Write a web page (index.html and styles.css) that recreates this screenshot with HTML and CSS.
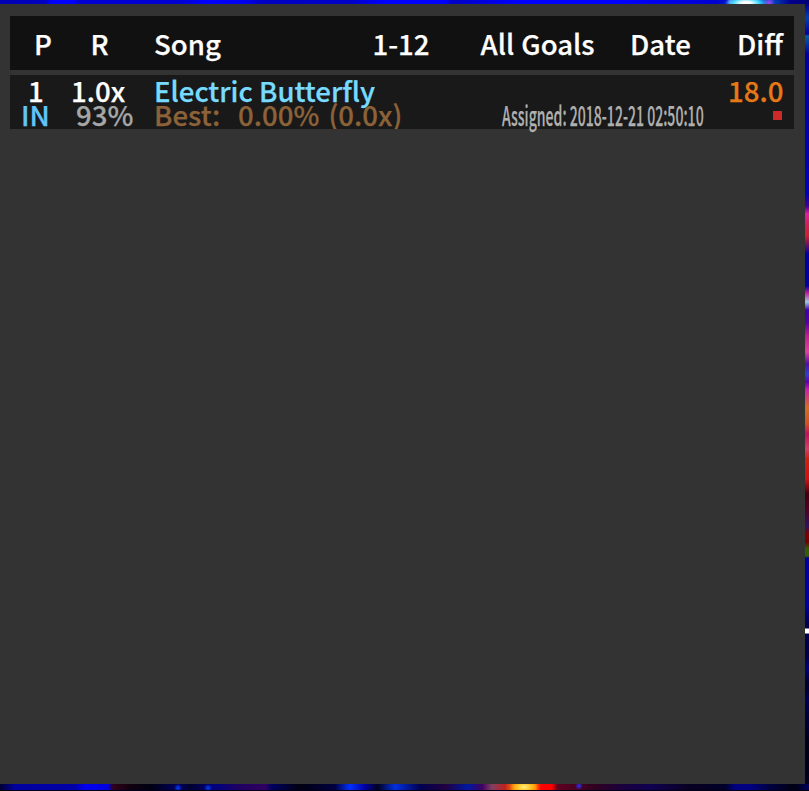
FILE: index.html
```
<!DOCTYPE html>
<html lang="en">
<head>
<meta charset="utf-8">
<title>Goals</title>
<link rel="stylesheet" href="styles.css">
</head>
<body>
<div class="backdrop">
  <div class="sky-top"></div>
  <main class="panel">
    <header class="bar columns">
      <span class="priority">P</span><span class="rate">R</span><span class="song">Song</span><span class="range">1-12</span><span class="filter">All Goals</span><span class="date">Date</span><span class="diff">Diff</span>
    </header>
    <section class="bar goal">
      <div class="line">
        <span class="g-priority">1</span><span class="g-rate">1.0x</span><span class="g-song">Electric Butterfly</span><span class="g-diff">18.0</span>
      </div>
      <div class="line second">
        <span class="g-mod">IN</span><span class="g-percent">93%</span><span class="g-best">Best:</span><span class="g-score">0.00% (0.0x)</span><span class="g-assigned">Assigned: 2018-12-21 02:50:10</span><i class="remove"></i>
      </div>
    </section>
  </main>
  <div class="sky-side"></div>
  <div class="sky-bottom"></div>
</div>
</body>
</html>
```
FILE: styles.css
```
* { box-sizing: border-box; }
body {
  margin: 0;
  overflow: hidden;
  background: #00005a;
  font: 500 27.6px "Noto Sans CJK JP", sans-serif;
  color: #fff;
  -webkit-text-stroke: 0.25px currentColor;
}
.backdrop {
  display: grid;
  grid-template-columns: 805px 4px;
  grid-template-rows: 4px 780px 7px;
  width: 809px;
  height: 791px;
}
.sky-top {
  grid-column: 1 / 3;
  background:
    radial-gradient(ellipse 22px 7px at 746px 3px, #fff 20%, #40d8ff 60%, transparent),
    radial-gradient(circle 4px at 731px 2px, #d070ff, transparent),
    radial-gradient(circle 6px at 769px 3px, #b040ff, transparent),
    linear-gradient(90deg, #0000b4, #0000c0 45px, #0000ff 52px, #0000ff 74px, #0000d2 78px, #0000d2 180px, #00f 205px, #0000f0 245px, #0000c4 260px, #0000c8 350px, #00f 385px, #00f 445px, #0000c4 452px, #00f 520px, #00f 620px, #0000d0 715px, #0050c0 770px, #000090 790px, #000070);
}
.panel { padding: 12px 11px 0 10px; background: #333; }
.sky-side {
  background: linear-gradient(180deg, #000090 0, #0040b0 14px, #0000a0 30px, #0060a0 32px, #0000a0 50px, #0000b8 190px, #400090 202px, #e020a0 210px, #d02050 222px, #d02030 232px, #0000a0 250px, #0000a0 282px, #c020a0 289px, #a0c8e0 298px, #4000b0 306px, #5000a0 318px, #c02090 332px, #e040a0 348px, #5010a0 360px, #3040d0 370px, #6000b0 378px, #d020b0 386px, #d07020 404px, #d05020 420px, #c01060 430px, #d04060 445px, #d02010 455px, #d01010 475px, #400010 490px, #500020 504px, #301060 522px, #800000 530px, #700000 538px, #306000 545px, #306000 552px, #0000a0 554px, #0000a0 600px, #000040 624px, #fff 625px, #fff 629px, #000050 630px, #000040 650px, #000078 665px, #000028 680px, #000050 695px, #000018 740px, #000020);
}
.sky-bottom {
  grid-column: 1 / 3;
  background:
    linear-gradient(transparent 6px, #000018 6px),
    radial-gradient(ellipse 14px 8px at 524px 3px, #fff080, #ffc020 50%, transparent),
    radial-gradient(circle 4px at 178px 4px, #0040ff, transparent),
    radial-gradient(circle 4px at 208px 4px, #0040ff, transparent),
    radial-gradient(circle 4px at 579px 2px, #3030ff, transparent),
    linear-gradient(90deg, #000030, #0000a0 15px, #0000a8 75px, #0000f0 85px, #0000e0 108px, #300018 113px, #100010 130px, #000010 150px, #000060 178px, #000030 190px, #000080 215px, #200060 240px, #300060 265px, #000060 272px, #000010 300px, #000040 335px, #0030ff 350px, #0000a0 365px, #000020 378px, #0030e0 395px, #000050 420px, #200040 445px, #0018a0 468px, #400060 482px, #804060 492px, #c02020 505px, #ff8000 515px, #ff8000 535px, #f00 541px, #f00 552px, #600020 557px, #300020 595px, #180040 625px, #100050 650px, #080020 690px, #000028 725px, #000080 735px, #000080 750px, #000040 770px, #000010 795px, #000060);
}
.bar { height: 54px; }
.bar span { display: block; flex: none; white-space: nowrap; transform-origin: left center; }
.columns {
  display: flex;
  line-height: 54px;
  margin-bottom: 5px;
  padding-left: 24px;
  background: #111;
}
.priority { width: 56.5px; }
.rate { width: 63.5px; }
.song { width: 218.5px; }
.range { width: 108px; }
.filter { width: 149.5px; word-spacing: 1px; }
.date { width: 107px; }
.goal { padding-top: 3px; background: #191919; }
.line { display: flex; height: 24px; line-height: 24px; }
.second { height: 27px; }
.g-priority { width: 43px; margin-left: 18px; }
.g-rate { width: 83px; }
.g-song { width: 574px; color: #77dbff; }
.g-diff { color: #e67817; }
.g-mod { width: 55px; margin-left: 11px; color: #62c5fa; }
.g-percent { width: 78px; color: #a6a6a6; }
.g-best { width: 84px; color: #8c6239; }
.g-score { width: 264px; overflow: clip; color: #8c6239; word-spacing: 3px; }
.g-assigned { width: 271px; height: 24px; color: #b0b0b0; transform: scaleX(.51); }
.remove { flex: none; width: 9px; height: 9px; margin-top: 9px; background: #cc2929; }
```
